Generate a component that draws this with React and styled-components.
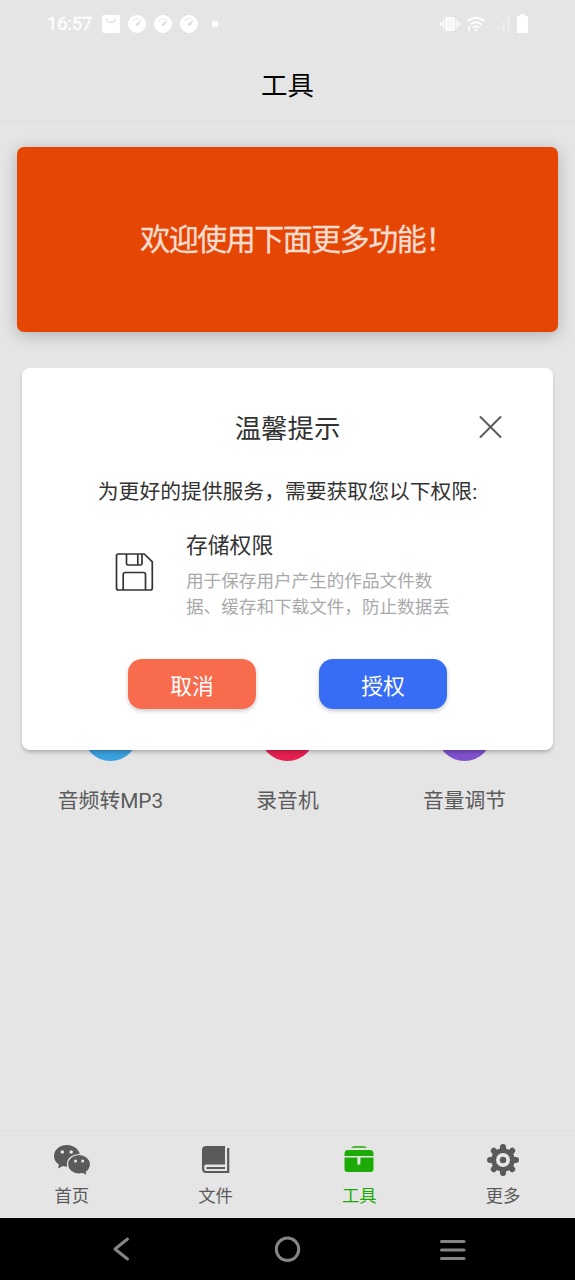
import React from "react";
import styled, { createGlobalStyle } from "styled-components";

const GlobalStyle = createGlobalStyle`
  * { box-sizing: border-box; }
  body {
    margin: 0;
    background: #e5e5e5;
    font-family: Roboto, "Noto Sans CJK SC", sans-serif;
  }
`;

const Screen = styled.div`
  position: relative;
  display: flex;
  flex-direction: column;
  width: 575px;
  height: 1280px;
  overflow: hidden;
  background: #e5e5e5;
`;

const StatusBar = styled.div`
  display: flex;
  justify-content: space-between;
  align-items: center;
  height: 47px;
  padding: 0 47px 0 47px;
  color: #fff;
  flex: none;
`;

const StatusGroup = styled.div`
  display: flex;
  align-items: center;
  gap: ${(p) => p.$gap}px;
`;

const Clock = styled.span`
  width: 47px;
  padding-top: 1px;
  font-size: 18px;
  font-weight: 400;
  line-height: 24px;
  letter-spacing: 0.1px;
  -webkit-text-stroke: 0.3px #fff;
`;

const Header = styled.header`
  height: 75px;
  display: flex;
  align-items: center;
  justify-content: center;
  flex: none;
  padding-bottom: 1px;
  border-bottom: 1px solid #e1e1e1;
  color: #000;
  font-size: 26.4px;
`;

const Main = styled.main`
  flex: 1;
  padding: 25px 17px 0;
`;

const Banner = styled.div`
  height: 185px;
  display: flex;
  align-items: center;
  justify-content: center;
  padding: 0 0 5px 19px;
  border-radius: 7px;
  background: #e64603;
  box-shadow: 0 3px 16px rgba(0, 0, 0, 0.23);
  color: #f7dccf;
  font-family: "Noto Sans CJK SC", sans-serif;
  font-size: 30px;
  letter-spacing: -1.5px;
  -webkit-text-stroke: 0.3px #f7dccf;
`;

const Tools = styled.div`
  display: grid;
  grid-template-columns: repeat(3, 177px);
  justify-content: center;
  margin-top: 374px;
`;

const Tool = styled.div`
  display: flex;
  flex-direction: column;
  align-items: center;
  gap: 25px;
  color: #5b5b5b;
  font-size: 20.8px;
  line-height: 30px;
`;

const ToolDisc = styled.div`
  width: 55px;
  height: 55px;
  border-radius: 50%;
  background: ${(p) => p.$color};
`;

const TabBar = styled.nav`
  display: grid;
  grid-template-columns: repeat(4, 1fr);
  height: 88px;
  flex: none;
  border-top: 1px solid #dedede;
`;

const Tab = styled.div`
  display: flex;
  flex-direction: column;
  align-items: center;
  padding-top: 9px;
  color: ${(p) => (p.$active ? "#1cab06" : "#5a5a5a")};
  font-size: 17.4px;
  line-height: 26px;

  svg { margin-bottom: 3px; }
`;

const SystemNav = styled.div`
  display: flex;
  align-items: center;
  justify-content: space-between;
  height: 62px;
  padding: 0 106px 0 105px;
  flex: none;
  background: #000;
`;

const Dialog = styled.section`
  position: absolute;
  top: 368px;
  left: 22px;
  width: 531px;
  height: 382px;
  padding-top: 37px;
  border-radius: 8px;
  background: #fff;
  box-shadow: 0 3px 4px -1px rgba(0, 0, 0, 0.27);
  color: #333;
`;

const DialogHeader = styled.div`
  display: grid;
  grid-template-columns: 1fr auto 1fr;
  align-items: center;
  height: 44px;
  padding: 0 50px;
`;

const DialogTitle = styled.h2`
  grid-column: 2;
  margin: 0;
  padding-bottom: 1px;
  font-size: 26.4px;
  font-weight: 400;
`;

const CloseButton = styled.button`
  display: flex;
  justify-self: end;
  padding: 0;
  border: 0;
  background: none;
`;

const Intro = styled.p`
  margin: 27px 0 0;
  text-align: center;
  font-size: 20.8px;
  line-height: 32px;
  white-space: nowrap;
`;

const Permission = styled.div`
  display: flex;
  align-items: center;
  gap: 32px;
  margin: 22px 0 0 92px;

  > svg { margin-bottom: 7px; }
`;

const PermissionName = styled.div`
  font-size: 21.8px;
  line-height: 32px;
`;

const PermissionText = styled.p`
  width: 268px;
  margin: 6px 0 0;
  color: #a9a9a9;
  font-size: 17.6px;
  line-height: 26px;
`;

const Actions = styled.div`
  display: flex;
  justify-content: center;
  gap: 63px;
  margin-top: 39px;
`;

const ActionButton = styled.button`
  width: 128px;
  height: 50px;
  padding: 0;
  border: 0;
  border-radius: 14px;
  background: ${(p) => p.$color};
  box-shadow: 0 2px 4px rgba(0, 0, 0, 0.22);
  color: #fff;
  font: inherit;
  font-size: 21.8px;
`;

const Bag = () => (
  <svg width="18" height="18" viewBox="0 0 18 18">
    <rect width="18" height="18" rx="2" fill="#fff" />
    <path d="M4.500 3.500a4.500 4 0 0 0 9 0" fill="none" stroke="#e0e0e0" strokeWidth="1.400" />
  </svg>
);

const Gauge = () => (
  <svg width="18" height="18" viewBox="0 0 18 18">
    <circle cx="9" cy="9" r="9" fill="#fff" />
    <path d="M4 6Q7.500 2.500 12 4" fill="none" stroke="#e9e9e9" strokeWidth="1.300" />
    <path d="M14 4.500L9.800 11 7.500 9.300z" fill="#d8d8d8" />
  </svg>
);

const Vibrate = () => (
  <svg width="20" height="16" viewBox="0 0 20 16" fill="none" stroke="#fff">
    <rect x="5.700" y="1.700" width="8.600" height="12.600" rx="1" fill="#f7f7f7" strokeWidth="1.400" />
    <path d="M3.400 4v8M16.600 4v8M.8 6v4M19.200 6v4" strokeWidth="1.400" />
  </svg>
);

const Wifi = () => (
  <svg width="18" height="16" viewBox="0 0 18 16" fill="none" stroke="#fff" strokeWidth="2">
    <path d="M1 5Q9-1.500 17 5M3.500 8.500q5.500-4.500 11 0M6 11.500q3-2.500 6 0" />
    <circle cx="9" cy="14" r="1.300" fill="#fff" stroke="none" />
    <path d="M2 10v5" strokeWidth="1.500" />
  </svg>
);

const Signal = () => (
  <svg width="18" height="16" viewBox="0 0 18 16" stroke="#f0f0f0" strokeWidth="2">
    <path d="M1.500 13v2M6.500 10v5M11.500 6v9M16.500 1v14" />
  </svg>
);

const Battery = () => (
  <svg width="11" height="19" viewBox="0 0 12 19" preserveAspectRatio="none" fill="#fff">
    <path d="M3.500 0h5v2H11a1 1 0 0 1 1 1v15a1 1 0 0 1-1 1H1a1 1 0 0 1-1-1V3a1 1 0 0 1 1-1h2.500z" />
  </svg>
);

const ChatIcon = () => (
  <svg width="40" height="40" viewBox="0 0 40 40">
    <g fill="#5a5a5a">
      <path d="M15 5C7.800 5 2 9.800 2 16c0 3.600 1.900 6.600 5 8.600L6 28.500l5-2.500c1.300.4 2.600.6 4 .6 7.200 0 13-4.600 13-10.600S22.200 5 15 5z" />
      <path
        d="M27 14.500c-6.300 0-11.500 4.300-11.500 9.700s5.200 9.900 11.500 9.900c1.200 0 2.500-.2 3.600-.5l4.600 2.100-.8-3.700c2.500-1.800 4.100-4.500 4.100-7.800 0-5.400-5.200-9.700-11.500-9.700z"
        stroke="#e5e5e5"
        strokeWidth="1.200"
      />
    </g>
    <g fill="#e5e5e5">
      <circle cx="10.300" cy="12" r="1.800" />
      <circle cx="19.200" cy="12" r="1.800" />
      <circle cx="23.500" cy="21" r="1.500" />
      <circle cx="30.700" cy="21" r="1.500" />
    </g>
  </svg>
);

const BookIcon = () => (
  <svg width="40" height="40" viewBox="0 0 40 40">
    <path d="M10 6h19v18H10q-3 0-4 2V10q0-4 4-4z" fill="#5a5a5a" />
    <path d="M32.200 8v24H10q-3 0-3-4 0-4.500 3-4.500h19" fill="none" stroke="#5a5a5a" strokeWidth="2.200" />
    <path d="M29 28H10.500" stroke="#5a5a5a" strokeWidth="2" />
  </svg>
);

const ToolboxIcon = () => (
  <svg width="40" height="40" viewBox="0 0 40 40" fill="#1cab06">
    <path d="M12 7.800q1-1.500 3-1.500h10q2 0 3 1.500z" />
    <path d="M9 10h22q3.500 0 3.500 4v2h-29v-2q0-4 3.500-4z" />
    <path d="M5.500 17.500H18.400v7h3v-7h13.100V29q0 3-3 3H8.500q-3 0-3-3z" />
  </svg>
);

const GearIcon = () => (
  <svg width="40" height="40" viewBox="0 0 40 40">
    <g stroke="#5a5a5a" strokeWidth="6" strokeLinecap="round">
      <path d="M20 7v26M7 20h26M10.800 10.800l18.400 18.400M29.200 10.800L10.800 29.200" />
    </g>
    <circle cx="20" cy="20" r="11.800" fill="#5a5a5a" />
    <circle cx="20" cy="20" r="7" fill="#e5e5e5" />
    <circle cx="20" cy="20" r="3.200" fill="#5a5a5a" />
  </svg>
);

const FloppyIcon = () => (
  <svg width="40" height="40" viewBox="0 0 40 40" fill="none" stroke="#333" strokeWidth="1.700" strokeLinejoin="round">
    <path d="M4.500 2H30.300L38.300 9.800V36q0 2-2 2H4.500q-2 0-2-2V4q0-2 2-2z" />
    <path d="M12.500 2v9.500q0 1.500 1.500 1.500h12.500q1.500 0 1.500-1.500V2M23.800 2v11" />
    <path d="M9.200 38V22.500q0-2 2-2H29.500q2 0 2 2V38" />
  </svg>
);

const tools = [
  { name: "音频转MP3", color: "#3aa1df" },
  { name: "录音机", color: "#e7204f" },
  { name: "音量调节", color: "#7f52cc" },
];

const tabs = [
  { name: "首页", Icon: ChatIcon },
  { name: "文件", Icon: BookIcon },
  { name: "工具", Icon: ToolboxIcon, active: true },
  { name: "更多", Icon: GearIcon },
];

export default function App() {
  return (
    <Screen>
      <GlobalStyle />
      <StatusBar>
        <StatusGroup $gap={8}>
          <Clock>16:57</Clock>
          <Bag />
          <Gauge />
          <Gauge />
          <Gauge />
          <svg width="18" height="8" viewBox="0 0 18 8">
            <circle cx="9" cy="4" r="3.200" fill="#fff" />
          </svg>
        </StatusGroup>
        <StatusGroup $gap={7}>
          <Vibrate />
          <Wifi />
          <Signal />
          <Battery />
        </StatusGroup>
      </StatusBar>
      <Header>工具</Header>
      <Main>
        <Banner>欢迎使用下面更多功能！</Banner>
        <Tools>
          {tools.map((tool) => (
            <Tool key={tool.name}>
              <ToolDisc $color={tool.color} />
              {tool.name}
            </Tool>
          ))}
        </Tools>
      </Main>
      <TabBar>
        {tabs.map(({ name, Icon, active }) => (
          <Tab key={name} $active={active}>
            <Icon />
            {name}
          </Tab>
        ))}
      </TabBar>
      <SystemNav>
        <svg width="32" height="32" viewBox="0 0 32 32">
          <path d="M22.500 6L10 16l12.500 10" fill="none" stroke="#858585" strokeWidth="3" strokeLinecap="round" strokeLinejoin="round" />
        </svg>
        <svg width="32" height="32" viewBox="0 0 32 32">
          <circle cx="16.500" cy="16.300" r="11.200" fill="none" stroke="#858585" strokeWidth="3" />
        </svg>
        <svg width="32" height="32" viewBox="0 0 32 32">
          <path d="M4.500 8.500h22.500M4.500 17h22.500M4.500 25.500h22.500" stroke="#858585" strokeWidth="3" strokeLinecap="round" />
        </svg>
      </SystemNav>
      <Dialog>
        <DialogHeader>
          <DialogTitle>温馨提示</DialogTitle>
          <CloseButton aria-label="关闭">
            <svg width="24" height="24" viewBox="0 0 24 24">
              <path d="M1.500 2l20 20M21.500 2L1.500 22" stroke="#5c5c5c" strokeWidth="2" strokeLinecap="round" />
            </svg>
          </CloseButton>
        </DialogHeader>
        <Intro>为更好的提供服务，需要获取您以下权限:</Intro>
        <Permission>
          <FloppyIcon />
          <div>
            <PermissionName>存储权限</PermissionName>
            <PermissionText>
              用于保存用户产生的作品文件数
              <br />
              据、缓存和下载文件，防止数据丢
            </PermissionText>
          </div>
        </Permission>
        <Actions>
          <ActionButton $color="#f96b4d">取消</ActionButton>
          <ActionButton $color="#366df4">授权</ActionButton>
        </Actions>
      </Dialog>
    </Screen>
  );
}
